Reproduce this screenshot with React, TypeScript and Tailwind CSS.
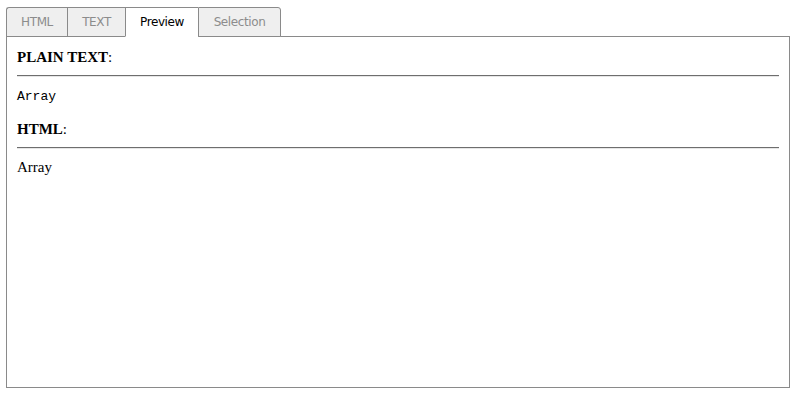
import React from "react";

const tabs = [
  { label: "HTML", w: "w-[61px]", active: false },
  { label: "TEXT", w: "w-[58px]", active: false },
  { label: "Preview", w: "w-[73px]", active: true },
  { label: "Selection", w: "w-[83px]", active: false },
];

export default function App() {
  return (
    <div className="w-[797px] h-[396px] bg-white pl-[6px] pt-[7px] font-['Liberation_Serif',serif]">
      <div className="flex relative z-10">
        {tabs.map((t, i) => (
          <div
            key={t.label}
            className={[
              t.w,
              "h-[30px] flex items-center justify-center border-t border-l border-[#8a8a8a] text-[12px] font-['DejaVu_Sans',sans-serif] tracking-[-0.4px]",
              i === 0 ? "rounded-tl-[3px]" : "",
              i === tabs.length - 1 ? "border-r rounded-tr-[3px]" : "",
              t.active
                ? "bg-white text-black border-b border-b-white"
                : "bg-[#efefef] text-[#8c8c8c] border-b border-b-[#8a8a8a]",
            ].join(" ")}
          >
            {t.label}
          </div>
        ))}
      </div>
      <div className="w-[784px] h-[352px] -mt-px border border-[#8a8a8a] pl-[10px] pr-[10px] text-black">
        <div className="mt-[10px] text-[15px] leading-[20px]">
          <b>PLAIN TEXT</b>:
        </div>
        <div className="mt-[8px] h-[2px] border-t border-t-[#6e6e6e] border-b border-b-[#e6e6e6]" />
        <div className="mt-[12px] text-[13px] leading-[16px] font-['Liberation_Mono',monospace]">
          Array
        </div>
        <div className="mt-[14px] text-[15px] leading-[20px]">
          <b>HTML</b>:
        </div>
        <div className="mt-[8px] h-[2px] border-t border-t-[#6e6e6e] border-b border-b-[#e6e6e6]" />
        <div className="mt-[8px] text-[15px] leading-[20px]">Array</div>
      </div>
    </div>
  );
}
